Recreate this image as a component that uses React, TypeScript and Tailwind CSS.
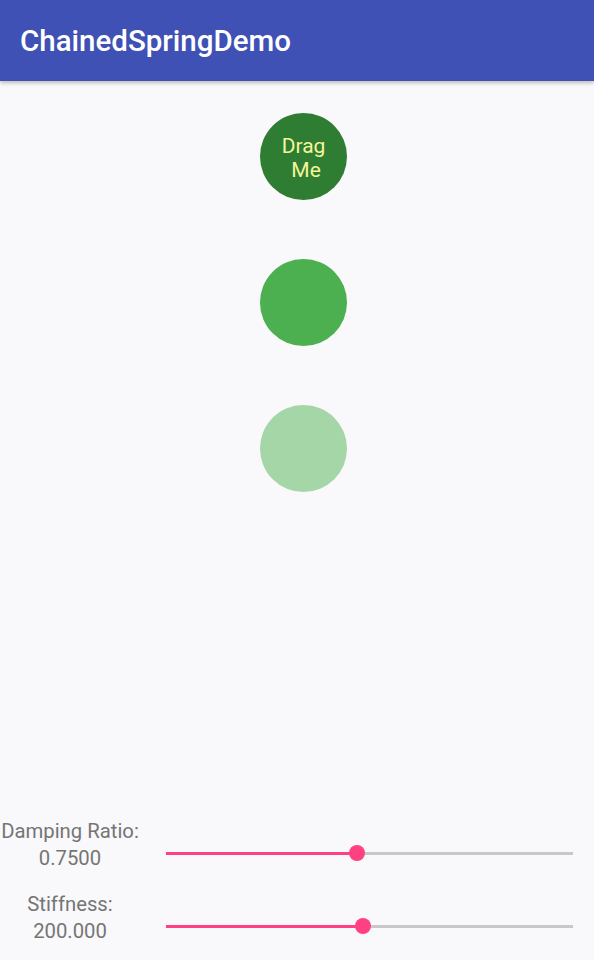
export default function App() {
  const circles = [
    { bg: "bg-[#2E7D32]", label: true },
    { bg: "bg-[#4CAF50]", label: false },
    { bg: "bg-[#A5D6A7]", label: false },
  ]
  const sliders = [
    { name: "Damping Ratio:", value: "0.7500", pos: 191 },
    { name: "Stiffness:", value: "200.000", pos: 197 },
  ]

  return (
    <div className="flex flex-col h-[960px] w-[594px] bg-[#F9F8FA] font-['Roboto',sans-serif] overflow-hidden">
      {/* App bar */}
      <div className="h-[81px] shrink-0 bg-[#3F51B5] flex items-center px-[20px] shadow-[0_2px_4px_rgba(0,0,0,0.25)] relative z-10">
        <h1 className="text-white text-[29.5px] font-medium leading-none mt-[3px]">ChainedSpringDemo</h1>
      </div>

      {/* Spring chain */}
      <div className="flex-1 flex flex-col items-center pt-[32px] gap-[59px] pl-[12px]">
        {circles.map((c, i) => (
          <div
            key={i}
            className={`w-[87px] h-[87px] rounded-full ${c.bg} flex items-center justify-center`}
          >
            {c.label && (
              <span className="text-[#F4F59A] text-[21px] leading-[24px] text-center mt-[2px] ml-[1px]">
                Drag
                <br />
                &nbsp;Me
              </span>
            )}
          </div>
        ))}
      </div>

      {/* Controls */}
      <div className="flex flex-col gap-[19px] pb-[15px]">
        {sliders.map((s) => (
          <div key={s.name} className="flex items-start">
            <div className="w-[140px] text-center text-[#757575] text-[20.3px] leading-[27px]">
              <div>{s.name}</div>
              <div>{s.value}</div>
            </div>
            <div className="ml-[26px] mt-[25px] w-[407px] h-[20px] relative flex items-center">
              <div className="h-[3px] bg-[#FF4081]" style={{ width: s.pos }} />
              <div className="h-[3px] flex-1 bg-[#C8C8C8]" />
              <div
                className="absolute w-[16px] h-[16px] rounded-full bg-[#FF4081] -translate-x-1/2"
                style={{ left: s.pos }}
              />
            </div>
          </div>
        ))}
      </div>
    </div>
  )
}
